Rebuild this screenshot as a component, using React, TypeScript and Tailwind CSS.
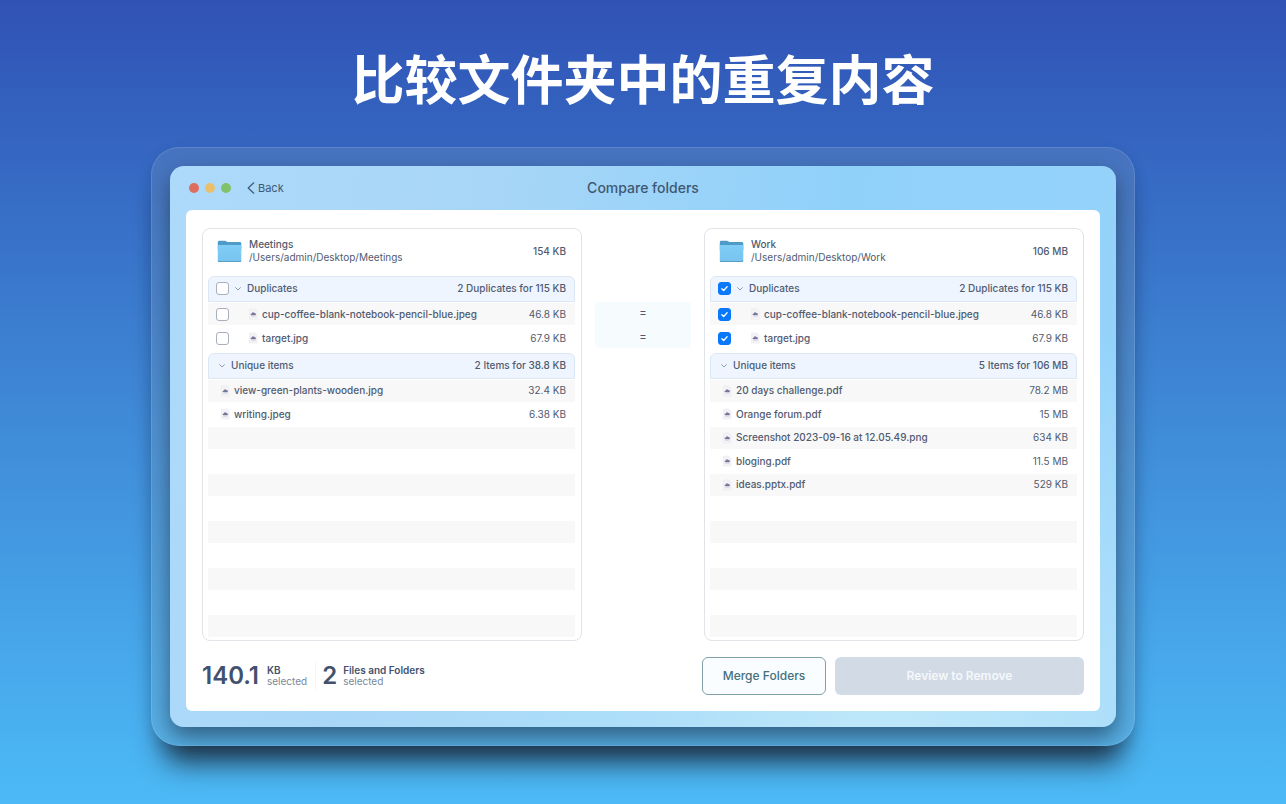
import React, { useState } from 'react';

interface FileItem {
  name: string;
  size: string;
}

interface Folder {
  id: string;
  name: string;
  path: string;
  size: string;
  duplicatesSummary: string;
  uniqueSummary: string;
  selected: boolean;
  unique: FileItem[];
}

const duplicates: FileItem[] = [
  { name: 'cup-coffee-blank-notebook-pencil-blue.jpeg', size: '46.8 KB' },
  { name: 'target.jpg', size: '67.9 KB' },
];

const folders: Folder[] = [
  {
    id: 'meetings',
    name: 'Meetings',
    path: '/Users/admin/Desktop/Meetings',
    size: '154 KB',
    duplicatesSummary: '2 Duplicates for 115 KB',
    uniqueSummary: '2 Items for 38.8 KB',
    selected: false,
    unique: [
      { name: 'view-green-plants-wooden.jpg', size: '32.4 KB' },
      { name: 'writing.jpeg', size: '6.38 KB' },
    ],
  },
  {
    id: 'work',
    name: 'Work',
    path: '/Users/admin/Desktop/Work',
    size: '106 MB',
    duplicatesSummary: '2 Duplicates for 115 KB',
    uniqueSummary: '5 Items for 106 MB',
    selected: true,
    unique: [
      { name: '20 days challenge.pdf', size: '78.2 MB' },
      { name: 'Orange forum.pdf', size: '15 MB' },
      { name: 'Screenshot 2023-09-16 at 12.05.49.png', size: '634 KB' },
      { name: 'bloging.pdf', size: '11.5 MB' },
      { name: 'ideas.pptx.pdf', size: '529 KB' },
    ],
  },
];

// the striped list always shows this many lines, filled or not
const UNIQUE_ROWS = 11;

function FolderIcon() {
  return (
    <svg width="25" height="23" viewBox="0 0 25 23" aria-hidden="true">
      <defs>
        <linearGradient id="folderFront" x1="0" y1="0" x2="0" y2="1">
          <stop offset="0" stopColor="#7fcdf6" />
          <stop offset="1" stopColor="#78c3f0" />
        </linearGradient>
      </defs>
      <path d="M.8 2.2C.8 1.2 1.4.7 2.4.7h5.4c.8 0 1.2.2 1.8.8l.7.6h12.4c1 0 1.6.5 1.6 1.6V10H.8z" fill="#4f9bc7" />
      <path d="M.8 5h23.5v15.3c0 1-.6 1.6-1.6 1.6H2.4c-1 0-1.6-.6-1.6-1.6z" fill="url(#folderFront)" />
      <path d="M.8 20.2c.2.5.7.7 1.6.7h20.3c.9 0 1.4-.2 1.6-.7v.2c0 1-.6 1.6-1.6 1.6H2.4c-1 0-1.6-.6-1.6-1.6z" fill="#5a9dc4" />
    </svg>
  );
}

function FileIcon() {
  return (
    <svg width="10" height="12" viewBox="0 0 10 12" className="shrink-0" aria-hidden="true">
      <path d="M1.5 1h5.3L9 3.2V11H1.5z" fill="#f3f3f7" stroke="#e6e7ed" strokeWidth=".5" />
      <path d="M2.7 7V5.8l1.3-.3V4.4h2.2v.5l1.6.6V7z" fill="#77759a" />
      <path d="M3.2 7.9h4.4" stroke="#a9aec8" strokeWidth=".8" />
    </svg>
  );
}

function Chevron() {
  return (
    <svg width="6" height="4" viewBox="0 0 6 4" fill="none" className="shrink-0" aria-hidden="true">
      <path d="M.6.6 3 3 5.4.6" stroke="#8490a3" strokeWidth=".9" strokeLinecap="round" strokeLinejoin="round" />
    </svg>
  );
}

interface CheckboxProps {
  id: string;
  label: string;
  checked: boolean;
  onChange: (checked: boolean) => void;
}

function Checkbox({ id, label, checked, onChange }: CheckboxProps) {
  return (
    <span className="grid size-[13px] shrink-0 place-items-center">
      <input
        id={id}
        type="checkbox"
        aria-label={label}
        checked={checked}
        onChange={(e) => onChange(e.target.checked)}
        className="col-start-1 row-start-1 size-[13px] appearance-none rounded-[3px] border border-[#a9b0bc] bg-white checked:border-[#0a78fb] checked:bg-[#0a78fb]"
      />
      {checked && (
        <svg width="9" height="9" viewBox="0 0 9 9" fill="none" className="pointer-events-none col-start-1 row-start-1" aria-hidden="true">
          <path d="M1.8 4.7 3.7 6.5 7.1 2.8" stroke="#fff" strokeWidth="1.3" strokeLinecap="round" strokeLinejoin="round" />
        </svg>
      )}
    </span>
  );
}

function FolderPanel({ folder }: { folder: Folder }) {
  const [checked, setChecked] = useState<boolean[]>(duplicates.map(() => folder.selected));
  const emptyRows = Array.from({ length: UNIQUE_ROWS - folder.unique.length });

  return (
    <section className="flex min-w-0 flex-1 flex-col rounded-lg border border-[#e0e4e9] pr-1.5 pb-0.5 pl-[5px] text-[10px] font-medium text-[#515b70]">
      <header className="flex h-[47px] items-center pr-[9px] pb-[3px] pl-[9px]">
        <FolderIcon />
        <div className="ml-[7px] flex-1 leading-[13px]">
          <h2>{folder.name}</h2>
          <p className="font-normal">{folder.path}</p>
        </div>
        <span>{folder.size}</span>
      </header>

      <div className="flex h-[26px] items-center rounded-t-md border border-[#dbe7f5] bg-[#eef5ff] pr-2 pb-px pl-[7px]">
        <Checkbox
          id={`${folder.id}-all`}
          label="Select all duplicates"
          checked={checked.every(Boolean)}
          onChange={(value) => setChecked(checked.map(() => value))}
        />
        <button type="button" className="ml-1.5 flex items-center gap-1.5">
          <Chevron />
          Duplicates
        </button>
        <span className="ml-auto">{folder.duplicatesSummary}</span>
      </div>
      <ul className="mb-[3px]">
        {duplicates.map((file, i) => (
          <li key={file.name} className="flex h-6 items-center border-y border-white pr-[9px] pl-2 odd:bg-[#f8f8f8]">
            <Checkbox
              id={`${folder.id}-${i}`}
              label={file.name}
              checked={checked[i]}
              onChange={(value) => setChecked(checked.map((c, n) => (n === i ? value : c)))}
            />
            <label htmlFor={`${folder.id}-${i}`} className="ml-[19px] flex items-center gap-1">
              <FileIcon />
              {file.name}
            </label>
            <span className="ml-auto font-normal">{file.size}</span>
          </li>
        ))}
      </ul>

      <div className="flex h-[26px] items-center rounded-t-md border border-[#dbe7f5] bg-[#eef5ff] pr-2 pb-px pl-2.5">
        <button type="button" className="flex items-center gap-1.5">
          <Chevron />
          Unique items
        </button>
        <span className="ml-auto">{folder.uniqueSummary}</span>
      </div>
      <ul className="flex flex-1 flex-col">
        {folder.unique.map((file) => (
          <li key={file.name} className="flex flex-1 items-center gap-1 border-y border-white pr-[9px] pl-3 odd:bg-[#f8f8f8]">
            <FileIcon />
            <span>{file.name}</span>
            <span className="ml-auto font-normal">{file.size}</span>
          </li>
        ))}
        {emptyRows.map((_, i) => (
          <li key={i} aria-hidden="true" className="flex-1 border-y border-white odd:bg-[#f8f8f8]" />
        ))}
      </ul>
    </section>
  );
}

export default function App() {
  return (
    <div className="flex min-h-screen flex-col bg-linear-to-b from-[#3052b5] via-[#3f88d6] to-[#4cbaf6] px-[151px] pb-[58px] font-['Inter',sans-serif]">
      <h1 className="flex h-[147px] items-center justify-center pt-2 font-['Noto_Sans_CJK_SC',sans-serif] text-[53px] leading-none font-bold whitespace-nowrap text-white">
        比较文件夹中的重复内容
      </h1>

      <div className="flex flex-1 rounded-[28px] border border-white/12 bg-[#8fa8b8]/20 p-[18px] shadow-[0_30px_28px_-14px_rgba(24,32,44,0.85),0_4px_14px_rgba(20,50,90,0.15)]">
        <main className="flex flex-1 flex-col rounded-[14px] bg-[radial-gradient(ellipse_at_75%_105%,#c0e8f9_0%,transparent_55%),linear-gradient(100deg,#addafa_0%,#a8d6f7_30%,#90d1fa_65%,#96d3fb_100%)] px-4 pb-4 shadow-[0_10px_22px_rgba(25,50,75,0.65)]">
          <div className="grid h-11 grid-cols-3 items-center text-[#3f5872]">
            <div className="flex items-center gap-1 pl-[3px]">
              <span className="size-2.5 rounded-full bg-[#dd6e5f]" />
              <span className="ml-0.5 size-2.5 rounded-full bg-[#e9bf6b]" />
              <span className="ml-0.5 size-2.5 rounded-full bg-[#7fc26a]" />
              <button type="button" className="ml-3 flex items-center gap-[3px] text-[11px]">
                <svg width="8" height="12" viewBox="0 0 8 12" fill="none" aria-hidden="true">
                  <path d="M6.8.8 1.2 6l5.6 5.2" stroke="#3f5872" strokeWidth="1.2" strokeLinecap="round" strokeLinejoin="round" />
                </svg>
                Back
              </button>
            </div>
            <span className="text-center text-sm font-medium">Compare folders</span>
          </div>

          <div className="flex flex-1 flex-col gap-4 rounded-md bg-white px-4 pt-[18px] pb-4">
            <div className="flex flex-1">
              <FolderPanel folder={folders[0]} />
              <div className="mx-[13px] mt-[74px] h-[46px] w-24 rounded-sm bg-[#f6fbfd] text-center text-[11px] leading-5 font-medium text-[#515b70]">
                {duplicates.map((file) => (
                  <div key={file.name} className="h-6">
                    =
                  </div>
                ))}
              </div>
              <FolderPanel folder={folders[1]} />
            </div>

            <footer className="flex items-center text-[10px] leading-[11px] text-[#7b8798]">
              <span className="text-2xl leading-none font-semibold text-[#42526e]">140.1</span>
              <p className="ml-2">
                <b className="block font-semibold text-[#42526e]">KB</b>
                selected
              </p>
              <span className="mr-1.5 ml-2 h-7 w-px bg-[#f4f6f8]" />
              <span className="text-2xl leading-none font-semibold text-[#42526e]">2</span>
              <p className="ml-1.5">
                <b className="block font-semibold text-[#42526e]">Files and Folders</b>
                selected
              </p>
              <div className="ml-auto flex gap-[9px]">
                <button type="button" className="h-[38px] w-[124px] rounded-md border border-[#7fa0a6] bg-[#fafdff] text-xs font-medium text-[#45707c]">
                  Merge Folders
                </button>
                <button type="button" disabled className="h-[38px] w-[249px] rounded-md bg-[#d2dae5] text-xs font-semibold text-[#f4f8fb]">
                  Review to Remove
                </button>
              </div>
            </footer>
          </div>
        </main>
      </div>
    </div>
  );
}
